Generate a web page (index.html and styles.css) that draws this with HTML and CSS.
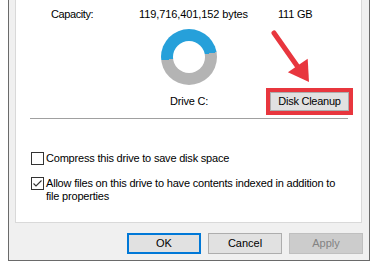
FILE: index.html
```html
<!DOCTYPE html>
<html>
<head>
<meta charset="utf-8">
<link rel="stylesheet" href="styles.css">
</head>
<body>
<div class="dialog">
  <div class="panel">
    <div class="cap-row">
      <span class="cap-label">Capacity:</span>
      <span class="cap-bytes">119,716,401,152 bytes</span>
      <span class="cap-gb">111 GB</span>
    </div>
    <div class="drive-area">
      <div class="drive-col">
        <div class="donut"><div class="hole"></div></div>
        <div class="drive-label">Drive C:</div>
      </div>
      <div class="cleanup-wrap">
        <button class="btn cleanup">Disk Cleanup</button>
      </div>
    </div>
    <div class="sep"></div>
    <div class="opts">
      <div class="opt">
        <span class="cb"></span>
        <span class="opt-text">Compress this drive to save disk space</span>
      </div>
      <div class="opt">
        <span class="cb"><svg width="11" height="11" viewBox="0 0 11 11"><polyline points="1.5,5.5 4,8 9.5,2.5" fill="none" stroke="#333" stroke-width="1.1"/></svg></span>
        <span class="opt-text">Allow files on this drive to have contents indexed in addition to<br>file properties</span>
      </div>
    </div>
  </div>
  <div class="btn-row">
    <button class="btn ok">OK</button>
    <button class="btn">Cancel</button>
    <button class="btn disabled">Apply</button>
  </div>
</div>
<svg class="arrow" width="374" height="265" viewBox="0 0 374 265">
  <line x1="274" y1="33" x2="300" y2="70" stroke="#e8363e" stroke-width="5" stroke-linecap="round"/>
  <polygon points="309,82 307.7,58.8 287.9,72.2" fill="#e8363e"/>
</svg>
</body>
</html>
```
FILE: styles.css
```css
html, body {
  margin: 0;
  padding: 0;
  background: #ffffff;
}
body {
  width: 374px;
  height: 265px;
  overflow: hidden;
  position: relative;
  font-family: "Liberation Sans", Arial, sans-serif;
  font-size: 11px;
  color: #000;
}
.dialog {
  margin-left: 8px;
  width: 360px;
  height: 260px;
  background: #f0f0f0;
  border: 1px solid #6a6a6a;
  border-top: none;
  display: flex;
  flex-direction: column;
}
.panel {
  margin-left: 6px;
  width: 345px;
  height: 222px;
  background: #fff;
  border: 1px solid #d9d9d9;
  border-top: none;
  display: flex;
  flex-direction: column;
}
.cap-row {
  display: flex;
  padding-left: 35px;
  margin-top: 8px;
  line-height: 13px;
}
.cap-label { width: 88px; letter-spacing: -0.4px; }
.cap-bytes { width: 139px; letter-spacing: -0.1px; }
.cap-gb { letter-spacing: -0.2px; }
.drive-area {
  display: flex;
  margin-top: 8px;
}
.drive-col {
  margin-left: 145px;
  width: 56px;
  display: flex;
  flex-direction: column;
  align-items: center;
}
.donut {
  width: 56px;
  height: 56px;
  border-radius: 50%;
  background: conic-gradient(from 263deg, #26a0da 0deg 177deg, #b4b4b4 177deg 360deg);
  display: flex;
  align-items: center;
  justify-content: center;
}
.hole {
  width: 32px;
  height: 32px;
  border-radius: 50%;
  background: #fff;
}
.drive-label {
  margin-top: 10px;
  line-height: 13px;
  white-space: nowrap;
  letter-spacing: -0.2px;
}
.cleanup-wrap {
  margin-left: 53px;
  padding-top: 63px;
}
.btn {
  font-family: "Liberation Sans", Arial, sans-serif;
  font-size: 11px;
  color: #000;
  background: #e1e1e1;
  border: 1px solid #adadad;
  width: 74px;
  height: 21px;
  padding: 0;
  margin: 0;
  line-height: 19px;
}
.cleanup {
  width: 79px;
  height: 19px;
  line-height: 17px;
  letter-spacing: -0.25px;
  outline: 4px solid #e8363e;
}
.sep {
  margin: 7px 0 0 14px;
  width: 318px;
  height: 1px;
  background: #a0a0a0;
}
.opts {
  margin-top: 33px;
  padding-left: 15px;
  display: flex;
  flex-direction: column;
  gap: 12px;
}
.opt {
  display: flex;
  align-items: flex-start;
  gap: 2px;
}
.cb {
  width: 11px;
  height: 11px;
  border: 1px solid #333;
  background: #fff;
  flex: none;
  display: flex;
}
.opt-text {
  line-height: 13px;
  letter-spacing: -0.2px;
}
.btn-row {
  display: flex;
  justify-content: flex-end;
  gap: 7px;
  margin-top: 10px;
  padding-right: 6px;
}
.ok {
  border: 1px solid #0078d7;
  box-shadow: inset 0 0 0 1px #0078d7;
}
.disabled {
  background: #cccccc;
  border-color: #bfbfbf;
  color: #838383;
}
.arrow {
  position: absolute;
  left: 0;
  top: 0;
  pointer-events: none;
}
```
